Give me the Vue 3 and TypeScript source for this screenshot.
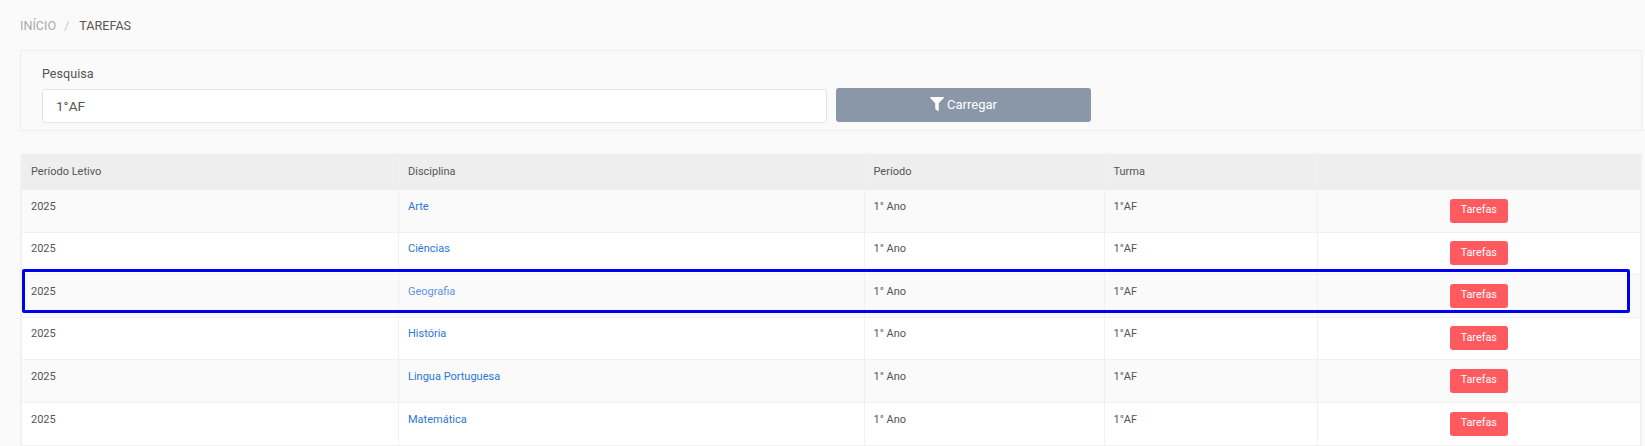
<script setup lang="ts">
interface Row { disciplina: string; selected?: boolean }
const rows: Row[] = [
  { disciplina: 'Arte' },
  { disciplina: 'Ciências' },
  { disciplina: 'Geografia', selected: true },
  { disciplina: 'História' },
  { disciplina: 'Lingua Portuguesa' },
  { disciplina: 'Matemática' },
]
</script>

<template>
  <main class="page">
    <nav class="crumbs">
      <span class="crumb-muted">INÍCIO</span>
      <span class="crumb-sep">/</span>
      <span class="crumb-current">TAREFAS</span>
    </nav>

    <section class="panel">
      <label class="label" for="busca">Pesquisa</label>
      <div class="search-row">
        <input id="busca" class="input" type="text" value="1°AF" />
        <button class="load" type="button">
          <svg class="filter" viewBox="0 0 512 512" aria-hidden="true">
            <path fill="currentColor" d="M487.976 0H24.028C2.71 0-8.047 25.866 7.058 40.971L192 225.941V432c0 7.831 3.821 15.17 10.237 19.662l80 55.98C298.02 518.69 320 507.493 320 487.98V225.941l184.947-184.97C520.021 25.896 509.338 0 487.976 0z" />
          </svg>
          Carregar
        </button>
      </div>
    </section>

    <div class="table-wrap">
      <table class="table">
        <colgroup>
          <col class="c1" /><col class="c2" /><col class="c3" /><col class="c4" /><col />
        </colgroup>
        <thead>
          <tr>
            <th>Período Letivo</th>
            <th>Disciplina</th>
            <th>Período</th>
            <th>Turma</th>
            <th></th>
          </tr>
        </thead>
        <tbody>
          <tr v-for="row in rows" :key="row.disciplina">
            <td>2025</td>
            <td><a class="link" :class="{ faded: row.selected }" href="#">{{ row.disciplina }}</a></td>
            <td>1° Ano</td>
            <td>1°AF</td>
            <td class="action"><button class="tasks" type="button">Tarefas</button></td>
          </tr>
        </tbody>
      </table>
      <div class="highlight"></div>
    </div>
  </main>
</template>

<style>
html, body { margin: 0; overflow: hidden; background: #fafafa; }
</style>

<style scoped>
.page {
  height: 446px;
  overflow: hidden;
  box-sizing: border-box;
  padding: 18px 3px 0 20px;
  background: #fafafa;
  font-family: Roboto, "Liberation Sans", sans-serif;
  color: #555;
}
.crumbs {
  display: flex;
  align-items: center;
  height: 15px;
  font-size: 12.6px;
  line-height: 15px;
}
.crumb-muted { color: #aaa; }
.crumb-sep { margin: 0 10px 0 8px; color: #ccc; }
.crumb-current { color: #555; }

.panel {
  box-sizing: border-box;
  height: 81px;
  margin-top: 17px;
  padding: 15px 21px 0;
  border: 1px solid #eee;
}
.label {
  display: block;
  font-size: 12.6px;
  line-height: 16px;
  color: #555;
}
.search-row {
  display: flex;
  gap: 9px;
  margin-top: 7px;
}
.input {
  box-sizing: border-box;
  width: 785px;
  height: 34px;
  padding: 0 13px;
  border: 1px solid #e4e4e4;
  border-radius: 3px;
  background: #fff;
  font: 13.5px Roboto, "Liberation Sans", sans-serif;
  color: #555;
  outline: none;
}
.load {
  display: flex;
  align-items: center;
  justify-content: center;
  gap: 3px;
  width: 255px;
  height: 34px;
  margin-top: -1px;
  padding: 0 0 2px;
  border: 0;
  border-radius: 3px;
  background: #8997a9;
  color: #fff;
  font: 13px Roboto, "Liberation Sans", sans-serif;
}
.filter { width: 14px; height: 14px; }

.table-wrap {
  position: relative;
  margin-top: 22px;
  box-sizing: border-box;
  border: 2px solid #f1f1f1;
  border-bottom: 0;
  border-radius: 3px 3px 0 0;
}
.table {
  width: 100%;
  table-layout: fixed;
  border-collapse: separate;
  border-spacing: 0;
  font-size: 11px;
}
.c1 { width: 376px; }
.c2 { width: 465.5px; }
.c3 { width: 240px; }
.c4 { width: 213px; }
th {
  height: 35px;
  padding: 0 0 3px 9px;
  text-align: left;
  background: #eee;
  font-weight: 400;
  color: #555;
  border-left: 1px solid #f1f1f1;
  box-sizing: border-box;
}
th:first-child, td:first-child { border-left: 0; padding-left: 9px; }
td {
  box-sizing: border-box;
  height: 42.6px;
  padding: 9.6px 0 0 9px;
  vertical-align: top;
  border-left: 1px solid #f1f1f1;
  border-bottom: 1px solid #f1f1f1;
  color: #555;
  line-height: 14px;
}
tbody tr:nth-child(odd) td { background: #fafafa; }
tbody tr:nth-child(even) td { background: #fff; }
.link { color: #2b76d9; text-decoration: none; }
.link.faded { color: #5d94e4; }
td.action { text-align: center; padding: 8.6px 0 0; }
.tasks {
  display: block;
  margin: 0 auto;
  width: 58px;
  height: 24px;
  padding: 0 0 2px;
  border: 0;
  border-radius: 3px;
  background: #ff5a60;
  color: #fff;
  font: 10.8px Roboto, "Liberation Sans", sans-serif;
}
.highlight {
  position: absolute;
  left: 0;
  top: 114px;
  width: 1608px;
  height: 44px;
  box-sizing: border-box;
  border: 3px solid #0000f0;
  border-radius: 2px;
  pointer-events: none;
}
</style>
